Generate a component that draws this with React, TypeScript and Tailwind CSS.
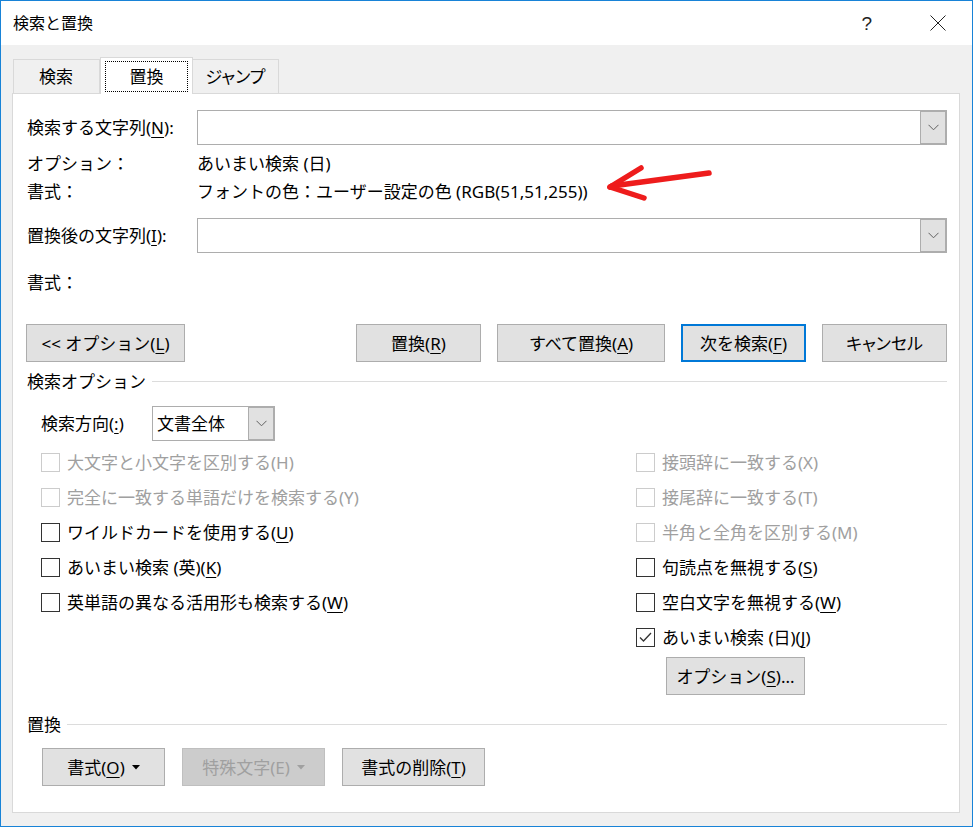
import React from "react";

const Chevron = () => (
  <svg width="11" height="7" viewBox="0 0 11 7" fill="none">
    <polyline points="0.5,0.8 5.5,5.8 10.5,0.8" stroke="#606060" strokeWidth="1" />
  </svg>
);

const Combo = ({ className = "" }: { className?: string }) => (
  <div className={`flex h-[35px] flex-1 items-stretch border border-[#adadad] bg-white ${className}`}>
    <div className="flex-1" />
    <div className="flex w-[26px] items-center justify-center border-l border-[#adadad] bg-[#e1e1e1] shadow-[inset_-1px_-1px_0_#adadad,inset_0_1px_0_#adadad]">
      <Chevron />
    </div>
  </div>
);

const Btn = ({
  children,
  w,
  focused = false,
  disabled = false,
}: {
  children: React.ReactNode;
  w: string;
  focused?: boolean;
  disabled?: boolean;
}) => (
  <div
    className={`flex h-[38px] items-center justify-center ${w} ${
      focused
        ? "border-2 border-[#0078d7] bg-[#e1e1e1] text-black"
        : disabled
        ? "border border-[#bfbfbf] bg-[#cccccc] text-[#a0a0a0]"
        : "border border-[#adadad] bg-[#e1e1e1] text-black"
    }`}
  >
    {children}
  </div>
);

const U = ({ children }: { children: React.ReactNode }) => (
  <span className="underline decoration-1 underline-offset-[3px]">{children}</span>
);

const Check = ({
  children,
  disabled = false,
  checked = false,
}: {
  children: React.ReactNode;
  disabled?: boolean;
  checked?: boolean;
}) => (
  <div className="flex h-[35px] items-center">
    <div
      className={`flex h-[19px] w-[19px] shrink-0 items-center justify-center border bg-white ${
        disabled ? "border-[#cccccc]" : "border-[#333333]"
      }`}
    >
      {checked && (
        <svg width="17" height="17" viewBox="0 0 17 17" fill="none">
          <polyline points="3,8.5 6.5,12 14,4" stroke="#333333" strokeWidth="1.3" />
        </svg>
      )}
    </div>
    <span className={`ml-[7px] whitespace-nowrap ${disabled ? "text-[#a0a0a0]" : "text-black"}`}>
      {children}
    </span>
  </div>
);

const DropTri = ({ color }: { color: string }) => (
  <svg width="8" height="5" viewBox="0 0 8 5" className="ml-[7px]">
    <polygon points="0,0 8,0 4,4.5" fill={color} />
  </svg>
);

export default function App() {
  return (
    <div className="h-[827px] w-[973px] font-['Noto_Sans','Noto_Sans_CJK_JP',sans-serif] text-[17px] leading-none text-black">
      <div className="flex h-full w-full flex-col border border-[#1883d7] bg-[#f0f0f0]">
        {/* Title bar */}
        <div className="flex h-[44px] shrink-0 items-center bg-white pl-[12px]">
          <span className="text-[16px]">検索と置換</span>
          <div className="flex-1" />
          <span className="mr-[58px] font-['Liberation_Sans',sans-serif] text-[19px] font-light text-[#222]">?</span>
          <svg width="16" height="16" viewBox="0 0 16 16" className="mr-[26px]">
            <line x1="0.5" y1="0.5" x2="15.5" y2="15.5" stroke="#222" strokeWidth="1" />
            <line x1="15.5" y1="0.5" x2="0.5" y2="15.5" stroke="#222" strokeWidth="1" />
          </svg>
        </div>

        {/* Body */}
        <div className="relative flex flex-1 flex-col pl-[11px] pr-[12px] pt-[12px]">
          {/* Tabs */}
          <div className="flex h-[36px] items-end pl-[1px]">
            <div className="flex h-[34px] w-[87px] items-center justify-center border border-b-0 border-[#d9d9d9] bg-[#f0f0f0] pr-[1px]">
              検索
            </div>
            <div className="relative z-10 -mb-px flex h-[37px] w-[93px] items-start justify-center border border-b-0 border-[#d9d9d9] bg-white pt-[3px]">
              <div className="flex h-[31px] w-[83px] items-center justify-center border border-dotted border-black">
                置換
              </div>
            </div>
            <div className="flex h-[34px] w-[86px] items-center justify-center border border-b-0 border-l-0 border-[#d9d9d9] bg-[#f0f0f0] [font-feature-settings:'palt']">
              ジャンプ
            </div>
          </div>

          {/* Panel */}
          <div className="relative flex h-[720px] flex-col border border-[#d9d9d9] bg-white pl-[14px] pr-[12px]">
            {/* Find what */}
            <div className="mt-[16px] flex h-[35px] items-center">
              <div className="w-[170px] whitespace-nowrap">
                検索する文字列(<U>N</U>):
              </div>
              <Combo />
            </div>
            <div className="mt-[4px] flex h-[28px] items-center">
              <div className="w-[170px]">オプション：</div>
              <div>あいまい検索 (日)</div>
            </div>
            <div className="flex h-[28px] items-center">
              <div className="w-[170px]">書式：</div>
              <div>フォントの色：ユーザー設定の色 (RGB(51,51,255))</div>
            </div>

            {/* Replace with */}
            <div className="mt-[13px] flex h-[35px] items-center">
              <div className="w-[170px] whitespace-nowrap">
                置換後の文字列(<U>I</U>):
              </div>
              <Combo />
            </div>
            <div className="mt-[15px] flex h-[28px] items-center">
              <div className="w-[170px]">書式：</div>
            </div>

            {/* Buttons */}
            <div className="mt-[28px] flex items-center">
              <div className="-ml-px">
                <Btn w="w-[159px]">
                  &lt;&lt; オプション(<U>L</U>)
                </Btn>
              </div>
              <div className="flex-1" />
              <div className="flex gap-[16px]">
                <Btn w="w-[125px]">
                  置換(<U>R</U>)
                </Btn>
                <Btn w="w-[168px]">
                  すべて置換(<U>A</U>)
                </Btn>
                <Btn w="w-[125px]" focused>
                  次を検索(<U>F</U>)
                </Btn>
                <Btn w="w-[125px]">
                  <span className="[font-feature-settings:'palt']">キャンセル</span>
                </Btn>
              </div>
            </div>

            {/* Search options header */}
            <div className="mt-[9px] flex h-[20px] items-center gap-[6px]">
              <span>検索オプション</span>
              <div className="h-px flex-1 bg-[#dcdcdc]" />
            </div>

            <div className="flex flex-col pl-[14px]">
              <div className="mt-[15px] flex h-[35px] items-center">
                <div className="w-[111px] whitespace-nowrap">
                  検索方向(<U>:</U>)
                </div>
                <div className="flex h-[35px] w-[123px] items-stretch border border-[#adadad] bg-white">
                  <div className="flex flex-1 items-center pl-[4px]">文書全体</div>
                  <div className="flex w-[26px] items-center justify-center border-l border-[#adadad] bg-[#e1e1e1] shadow-[inset_-1px_-1px_0_#adadad,inset_0_1px_0_#adadad]">
                    <Chevron />
                  </div>
                </div>
              </div>

              <div className="mt-[4px] flex">
                <div className="flex w-[595px] flex-col">
                  <Check disabled>大文字と小文字を区別する(H)</Check>
                  <Check disabled>完全に一致する単語だけを検索する(Y)</Check>
                  <Check>
                    ワイルドカードを使用する(<U>U</U>)
                  </Check>
                  <Check>
                    あいまい検索 (英)(<U>K</U>)
                  </Check>
                  <Check>
                    英単語の異なる活用形も検索する(<U>W</U>)
                  </Check>
                </div>
                <div className="flex flex-col">
                  <Check disabled>接頭辞に一致する(X)</Check>
                  <Check disabled>接尾辞に一致する(T)</Check>
                  <Check disabled>半角と全角を区別する(M)</Check>
                  <Check>
                    句読点を無視する(<U>S</U>)
                  </Check>
                  <Check>
                    空白文字を無視する(<U>W</U>)
                  </Check>
                  <Check checked>
                    あいまい検索 (日)(<U>J</U>)
                  </Check>
                  <div className="ml-[30px] mt-[2px]">
                    <Btn w="w-[139px]">
                      オプション(<U>S</U>)...
                    </Btn>
                  </div>
                </div>
              </div>
            </div>

            {/* Replace section */}
            <div className="mt-[19px] flex h-[20px] items-center gap-[6px]">
              <span>置換</span>
              <div className="h-px flex-1 bg-[#dcdcdc]" />
            </div>
            <div className="mt-[14px] flex gap-[17px] pl-[15px]">
              <Btn w="w-[123px]">
                書式(<U>O</U>)
                <DropTri color="#000" />
              </Btn>
              <Btn w="w-[143px]" disabled>
                特殊文字(E)
                <DropTri color="#a0a0a0" />
              </Btn>
              <Btn w="w-[143px]">
                書式の削除(<U>T</U>)
              </Btn>
            </div>

            {/* Red annotation arrow */}
            <svg
              width="120"
              height="50"
              viewBox="0 0 120 50"
              className="pointer-events-none absolute left-[587px] top-[66px]"
            >
              <g stroke="#ee1c1c" strokeWidth="5.5" strokeLinecap="round" fill="none">
                <line x1="12" y1="26" x2="109" y2="13" />
                <line x1="10" y1="27" x2="41" y2="8" />
                <line x1="10" y1="27" x2="44" y2="38" />
              </g>
            </svg>
          </div>
        </div>
      </div>
    </div>
  );
}
